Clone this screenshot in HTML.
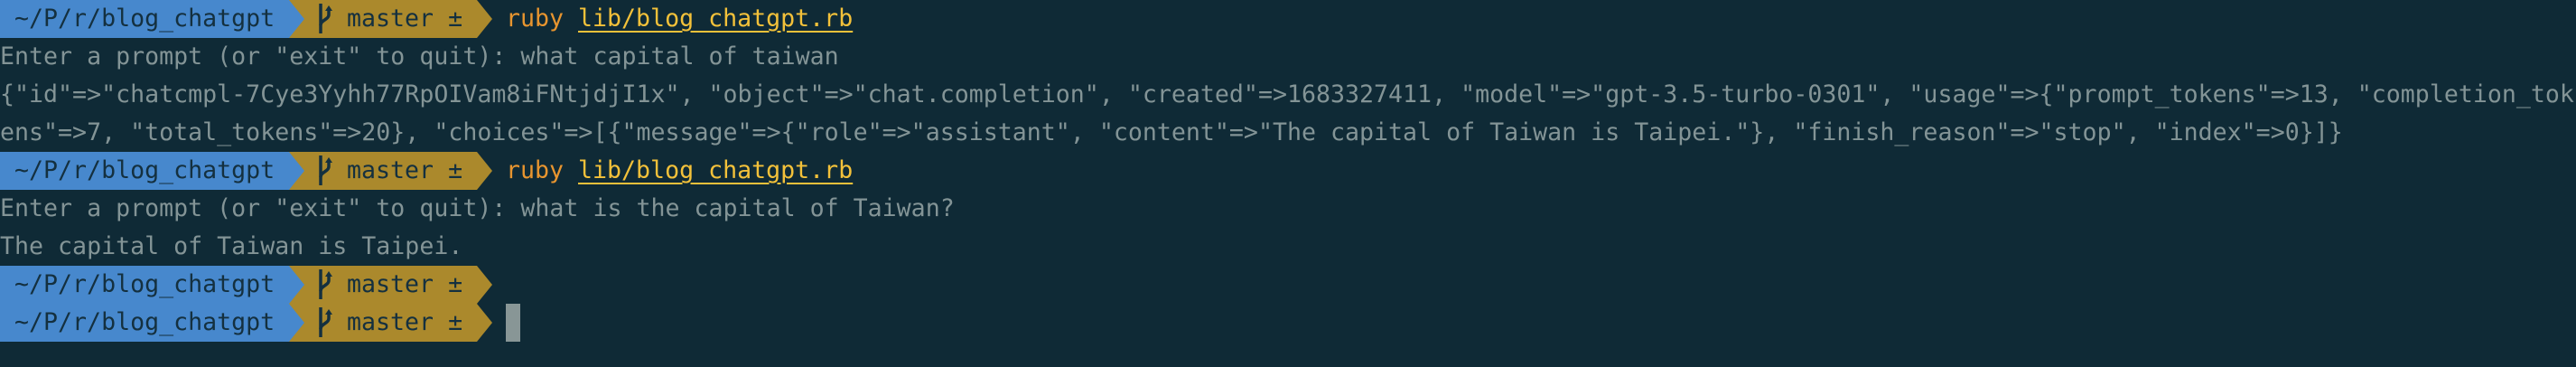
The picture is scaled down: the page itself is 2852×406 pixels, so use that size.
<!DOCTYPE html>
<html><head><meta charset="utf-8"><style>
html,body{margin:0;padding:0;background:#0f2a36;width:2852px;height:406px;overflow:hidden}
.r{position:absolute;left:0;height:42px;width:2852px;font-family:"DejaVu Sans Mono","Liberation Mono",monospace;font-size:26.6px;line-height:41px;color:#839496;white-space:pre}
.t{position:absolute;top:0;left:0}
.blue{position:absolute;top:0;left:0;width:320px;height:42px;background:#4788cd}
.gold{position:absolute;top:0;left:320px;width:208px;height:42px;background:#ab892c}
.dk{color:#14303f}
.ruby{color:#e8952f}
.file{color:#f3c13a;text-decoration:underline;text-decoration-thickness:2px;text-underline-offset:5px}
svg{position:absolute;top:0;left:0}
.cur{position:absolute;left:560px;top:0;width:16px;height:42px;background:#889696}
</style></head><body>

<div class="r" style="top:0">
<div class="blue"></div><div class="gold"></div>
<svg width="600" height="42"><polygon points="320,0 337,21 320,42" fill="#4788cd"/><polygon points="528,0 545,21 528,42" fill="#ab892c"/>
<g stroke="#14303f" stroke-width="3.5" fill="none"><line x1="355" y1="4" x2="355" y2="37"/><path d="M355 28 C355 22 364 22 364 16 L364 11"/></g><polygon points="360,12 364,6 368,12" fill="#14303f"/></svg>
<span class="t dk" style="left:16px">~/P/r/blog_chatgpt</span><span class="t dk" style="left:384px">master ±</span><span class="t ruby" style="left:560px">ruby</span><span class="t file" style="left:640px">lib/blog_chatgpt.rb</span>
</div>

<div class="r" style="top:42px"><span class="t">Enter a prompt (or "exit" to quit): what capital of taiwan</span></div>
<div class="r" style="top:84px"><span class="t">{"id"=>"chatcmpl-7Cye3Yyhh77RpOIVam8iFNtjdjI1x", "object"=>"chat.completion", "created"=>1683327411, "model"=>"gpt-3.5-turbo-0301", "usage"=>{"prompt_tokens"=>13, "completion_tok</span></div>
<div class="r" style="top:126px"><span class="t">ens"=>7, "total_tokens"=>20}, "choices"=>[{"message"=>{"role"=>"assistant", "content"=>"The capital of Taiwan is Taipei."}, "finish_reason"=>"stop", "index"=>0}]}</span></div>

<div class="r" style="top:168px">
<div class="blue"></div><div class="gold"></div>
<svg width="600" height="42"><polygon points="320,0 337,21 320,42" fill="#4788cd"/><polygon points="528,0 545,21 528,42" fill="#ab892c"/>
<g stroke="#14303f" stroke-width="3.5" fill="none"><line x1="355" y1="4" x2="355" y2="37"/><path d="M355 28 C355 22 364 22 364 16 L364 11"/></g><polygon points="360,12 364,6 368,12" fill="#14303f"/></svg>
<span class="t dk" style="left:16px">~/P/r/blog_chatgpt</span><span class="t dk" style="left:384px">master ±</span><span class="t ruby" style="left:560px">ruby</span><span class="t file" style="left:640px">lib/blog_chatgpt.rb</span>
</div>

<div class="r" style="top:210px"><span class="t">Enter a prompt (or "exit" to quit): what is the capital of Taiwan?</span></div>
<div class="r" style="top:252px"><span class="t">The capital of Taiwan is Taipei.</span></div>

<div class="r" style="top:294px">
<div class="blue"></div><div class="gold"></div>
<svg width="600" height="42"><polygon points="320,0 337,21 320,42" fill="#4788cd"/><polygon points="528,0 545,21 528,42" fill="#ab892c"/>
<g stroke="#14303f" stroke-width="3.5" fill="none"><line x1="355" y1="4" x2="355" y2="37"/><path d="M355 28 C355 22 364 22 364 16 L364 11"/></g><polygon points="360,12 364,6 368,12" fill="#14303f"/></svg>
<span class="t dk" style="left:16px">~/P/r/blog_chatgpt</span><span class="t dk" style="left:384px">master ±</span>
</div>

<div class="r" style="top:336px">
<div class="blue"></div><div class="gold"></div>
<svg width="600" height="42"><polygon points="320,0 337,21 320,42" fill="#4788cd"/><polygon points="528,0 545,21 528,42" fill="#ab892c"/>
<g stroke="#14303f" stroke-width="3.5" fill="none"><line x1="355" y1="4" x2="355" y2="37"/><path d="M355 28 C355 22 364 22 364 16 L364 11"/></g><polygon points="360,12 364,6 368,12" fill="#14303f"/></svg>
<span class="t dk" style="left:16px">~/P/r/blog_chatgpt</span><span class="t dk" style="left:384px">master ±</span>
<div class="cur"></div>
</div>

</body></html>
